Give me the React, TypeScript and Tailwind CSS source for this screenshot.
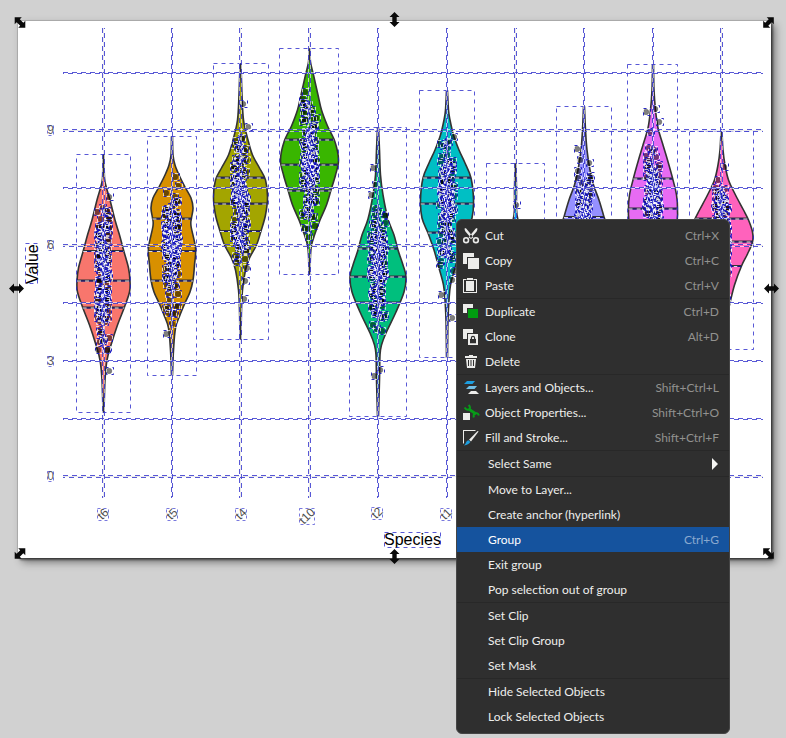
import type { ReactNode } from "react";

type Violin = {
  cx: number;
  color: string;
  box: [number, number, number, number];
  profile: [number, number][];
  lines: number[];
  cloud: [number, number, number];
  spread: number;
  strays: [number, number][];
};

const INK = "#2020c8";

const violins: Violin[] = [
  {
    cx: 103.5, color: "#F8766D", box: [76.5, 154.5, 54, 258],
    profile: [[155, 0.5], [178, 1], [188, 3], [200, 6.5], [220, 11.5], [235, 16], [250, 20], [268, 25], [281, 26.5], [292, 26], [307, 21], [325, 14], [345, 7.5], [360, 3.5], [380, 1.5], [412, 0.5]],
    lines: [251, 280.5, 307.5], cloud: [194, 270, 356], spread: 8,
    strays: [[109, 197], [109, 371], [97, 212], [98, 228], [98, 350], [107, 350]],
  },
  {
    cx: 172, color: "#D89000", box: [147.5, 136.5, 49, 239],
    profile: [[137, 0.5], [155, 1], [165, 3], [175, 7], [187, 13], [198, 19], [208, 21], [218, 19.5], [226, 19], [248, 23.5], [265, 22.5], [280, 21], [292, 18], [303, 13], [315, 8], [328, 3.5], [350, 1.5], [375, 0.5]],
    lines: [218.5, 251, 280.5], cloud: [188, 245, 322], spread: 9,
    strays: [[166, 334], [175, 177], [178, 186], [166, 193], [172, 324]],
  },
  {
    cx: 240.5, color: "#A3A500", box: [213.5, 63.5, 55, 276],
    profile: [[64, 0.5], [95, 1.5], [120, 3], [140, 7.5], [155, 12], [168, 19], [180, 25], [197, 27], [215, 25], [231, 20.5], [245, 16], [258, 9], [270, 5], [290, 2], [310, 1], [339, 0.5]],
    lines: [177.5, 203.5, 231], cloud: [130, 202, 278], spread: 9,
    strays: [[243, 104], [248, 127], [245, 281], [244, 299], [236, 141], [246, 160]],
  },
  {
    cx: 309.5, color: "#39B600", box: [279.5, 48.5, 59, 226],
    profile: [[49, 0.5], [62, 1], [75, 4], [95, 8.5], [110, 12], [126, 18], [142, 25.5], [160, 29], [175, 26], [190, 21.5], [205, 17], [220, 10.5], [235, 5], [245, 2], [255, 1], [274, 0.5]],
    lines: [139.5, 164.5, 190.5], cloud: [84, 160, 238], spread: 9,
    strays: [[305, 92], [305, 106], [316, 118], [303, 112], [315, 202]],
  },
  {
    cx: 378, color: "#00BF7D", box: [349.5, 127.5, 57, 289],
    profile: [[128, 0.5], [150, 1.5], [175, 2.5], [195, 5], [219, 10], [235, 16], [250, 20], [265, 25], [277, 28], [292, 26], [312, 18], [333, 8], [345, 3.5], [355, 2], [380, 1.5], [416, 0.5]],
    lines: [248.5, 276.5, 302.5], cloud: [200, 272, 340], spread: 9,
    strays: [[373, 168], [371, 195], [375, 185], [374, 376], [380, 370], [385, 223]],
  },
  {
    cx: 447, color: "#00BFC4", box: [419.5, 90.5, 55, 267],
    profile: [[91, 0.5], [110, 1.5], [120, 3], [135, 6.5], [150, 12], [163, 18], [178, 24], [200, 26.5], [218, 25], [233, 19], [250, 13], [268, 8], [285, 3.5], [300, 2], [320, 1], [357, 0.5]],
    lines: [177.5, 203.5, 232.5], cloud: [128, 200, 280], spread: 9,
    strays: [[441, 295], [452, 318], [452, 280], [440, 144]],
  },
  {
    cx: 515.5, color: "#00B0F6", box: [486.5, 163.5, 58, 220],
    profile: [[164, 0.5], [190, 1], [215, 1.5], [240, 8], [280, 26], [330, 8], [380, 0.5]],
    lines: [], cloud: [250, 280, 320], spread: 7, strays: [[516, 205]],
  },
  {
    cx: 584, color: "#9590FF", box: [556.5, 106.5, 55, 240],
    profile: [[107, 0.5], [130, 1.5], [150, 3], [170, 6], [185, 9.5], [200, 15], [217, 20], [240, 26], [280, 10], [345, 0.5]],
    lines: [217], cloud: [166, 225, 290], spread: 8,
    strays: [[577, 149], [589, 163], [580, 160], [590, 176], [581, 193], [590, 195]],
  },
  {
    cx: 653, color: "#E76BF3", box: [627.5, 64.5, 50, 240],
    profile: [[65, 0.5], [90, 1], [110, 2.5], [128, 5], [145, 10], [160, 14.5], [178, 19.5], [195, 23.5], [210, 24.5], [225, 23], [260, 10], [300, 0.5]],
    lines: [178.5, 208.5], cloud: [136, 200, 280], spread: 9,
    strays: [[646, 112], [655, 109], [659, 122], [646, 156], [650, 132]],
  },
  {
    cx: 721.5, color: "#FF62BC", box: [689.5, 131.5, 64, 218],
    profile: [[132, 0.5], [150, 1.5], [165, 3.5], [180, 7], [195, 14], [210, 22], [220, 27], [232, 31], [242, 31], [254, 26], [266, 20], [285, 13], [305, 8], [330, 2], [349, 0.5]],
    lines: [218.5, 241.5, 266], cloud: [176, 232, 300], spread: 9,
    strays: [[724, 167], [718, 180], [717, 205]],
  },
];

const minorRows = [72.5, 187.5, 302.5, 360.5, 418.5];
const majorRows = [129.5, 244.5, 475.5];
const columns: [number, number][] = [
  [102.5, 104.5], [171.5, 172.5], [239.5, 241.5], [308.5, 310.5], [377.5, 378.5],
  [446.5, 447.5], [514.5, 516.5], [583.5, 584.5], [652.5, 653.5], [720.5, 722.5],
];

const rowLabels: [string, number][] = [["9", 130], ["6", 245], ["3", 361], ["0", 476]];
const columnLabels: [string, number, number][] = [
  ["t6", 103, 514], ["t5", 172, 514], ["t4", 241, 514], ["t10", 307, 516], ["t2", 377, 513], ["t1", 446, 514],
];

function outline(v: Violin) {
  const right = v.profile.map(([y, w]) => [v.cx + w, y]);
  const left = v.profile.map(([y, w]) => [v.cx - w, y]).reverse();
  const side = (pts: number[][]) => {
    let d = "";
    for (let i = 0; i < pts.length - 1; i++) {
      const a = pts[Math.max(0, i - 1)];
      const b = pts[i];
      const c = pts[i + 1];
      const e = pts[Math.min(pts.length - 1, i + 2)];
      d += `C${b[0] + (c[0] - a[0]) / 6} ${b[1] + (c[1] - a[1]) / 6} ${c[0] - (e[0] - b[0]) / 6} ${c[1] - (e[1] - b[1]) / 6} ${c[0]} ${c[1]}`;
    }
    return d;
  };
  return `M${right[0][0]} ${right[0][1]}${side(right)}L${left[0][0]} ${left[0][1]}${side(left)}Z`;
}

function widthAt(v: Violin, y: number) {
  for (let i = 0; i < v.profile.length - 1; i++) {
    const [y0, w0] = v.profile[i];
    const [y1, w1] = v.profile[i + 1];
    if (y >= y0 && y <= y1) return w0 + ((w1 - w0) * (y - y0)) / (y1 - y0);
  }
  return 1;
}

function scatter(v: Violin, seed: number) {
  let s = seed * 7919 + 17;
  const rnd = () => {
    s = (s * 16807) % 2147483647;
    return s / 2147483647;
  };
  const [top, mid, bottom] = v.cloud;
  const pts: [number, number][] = [];
  for (let i = 0; i < 125; i++) {
    const t = (rnd() + rnd()) / 2;
    const y = t < 0.5 ? top + (mid - top) * t * 2 : mid + (bottom - mid) * (t - 0.5) * 2;
    const reach = Math.min(v.spread - 2, widthAt(v, y) + 2);
    pts.push([Math.round(v.cx + (rnd() * 2 - 1) * reach), Math.round(y)]);
  }
  return pts;
}

function Dot({ x, y }: { x: number; y: number }) {
  return <circle cx={x} cy={y} r={2.8} fill="#000" fillOpacity={0.5} stroke="#222" strokeOpacity={0.5} strokeWidth={0.6} />;
}

function DotBox({ x, y, n }: { x: number; y: number; n: number }) {
  return (
    <g fill="none">
      <rect x={x - 3.5} y={y - 3.5} width={7} height={7} stroke="#fff" strokeOpacity={0.7} strokeDasharray="4 3" strokeDashoffset={(n % 7) + 4} />
      <rect x={x - 3.5} y={y - 3.5} width={7} height={7} stroke="#1212c0" strokeOpacity={0.9} strokeDasharray="3 4" strokeDashoffset={n % 7} />
    </g>
  );
}

function ViolinShape({ v, index }: { v: Violin; index: number }) {
  const [x, y, w, h] = v.box;
  const cloud = scatter(v, index + 1);
  return (
    <g>
      <path d={outline(v)} fill={v.color} stroke="#333" strokeWidth={1.6} />
      {v.lines.map((ly) => {
        const hw = widthAt(v, ly);
        return (
          <g key={ly}>
            <line x1={v.cx - hw} x2={v.cx + hw} y1={ly} y2={ly} stroke="#333" strokeWidth={2} />
            <line x1={v.cx - hw} x2={v.cx + hw} y1={ly + 0.5} y2={ly + 0.5} stroke="#d8d8ee" strokeDasharray="4 4" />
            <line x1={v.cx - hw} x2={v.cx + hw} y1={ly + 0.5} y2={ly + 0.5} stroke="#14148c" strokeDasharray="4 4" strokeDashoffset={4} />
          </g>
        );
      })}
      {cloud.map(([px, py], i) => <Dot key={i} x={px} y={py} />)}
      {v.strays.map(([px, py], i) => <Dot key={`s${i}`} x={px} y={py} />)}
      {cloud.map(([px, py], i) => <DotBox key={i} x={px} y={py} n={i} />)}
      {v.strays.map(([px, py], i) => <DotBox key={`s${i}`} x={px + 1} y={py} n={i} />)}
      <rect x={x} y={y} width={w} height={h} fill="none" stroke={INK} strokeOpacity={0.75} strokeDasharray="4 4" />
    </g>
  );
}

function Handle({ x, y, angle }: { x: number; y: number; angle: number }) {
  return (
    <path
      transform={`translate(${x} ${y}) rotate(${angle})`}
      d="M-7.5 0L-2.5 -5V-2.2H2.5V-5L7.5 0L2.5 5V2.2H-2.5V5Z"
      fill="#0a0a0a"
    />
  );
}

function Guide({ x1, y1, x2, y2, offset }: { x1: number; y1: number; x2: number; y2: number; offset: number }) {
  return (
    <g>
      <line x1={x1} y1={y1} x2={x2} y2={y2} stroke="#fff" strokeOpacity={0.6} />
      <line x1={x1} y1={y1} x2={x2} y2={y2} stroke={INK} strokeOpacity={0.75} strokeDasharray="5 4" strokeDashoffset={offset} />
    </g>
  );
}

function Chart() {
  return (
    <svg
      viewBox="18 21 753 537"
      className="block h-auto w-full overflow-visible"
      role="img"
      aria-label="Violin plot of Value by Species"
      fontFamily='"Liberation Sans", Arial, sans-serif'
    >
      {majorRows.map((y) => <line key={y} x1={63} x2={763} y1={y + 1} y2={y + 1} stroke="#ebebeb" />)}
      {columns.map(([a, b]) => <line key={a} x1={(a + b) / 2} x2={(a + b) / 2} y1={28} y2={498} stroke="#ebebeb" />)}
      {violins.map((v, i) => <ViolinShape key={v.cx} v={v} index={i} />)}
      {minorRows.map((y) => (
        <g key={y}>
          <Guide x1={63} x2={763} y1={y} y2={y} offset={0} />
          <Guide x1={63} x2={763} y1={y + 1} y2={y + 1} offset={4} />
        </g>
      ))}
      {majorRows.map((y) => (
        <g key={y}>
          <Guide x1={63} x2={763} y1={y} y2={y} offset={0} />
          <Guide x1={63} x2={763} y1={y + 2} y2={y + 2} offset={3} />
        </g>
      ))}
      {columns.map(([a, b]) => (
        <g key={a}>
          <Guide x1={a} x2={a} y1={28} y2={498} offset={0} />
          <Guide x1={b} x2={b} y1={28} y2={498} offset={4} />
        </g>
      ))}
      {rowLabels.map(([t, y]) => (
        <g key={t}>
          <text x={50.5} y={y + 4} textAnchor="middle" fontSize={12} fill="#5d5d5d">{t}</text>
          <rect x={47.5} y={y - 4.5} width={6} height={10} fill="none" stroke={INK} strokeOpacity={0.6} strokeDasharray="3 3" />
        </g>
      ))}
      {columnLabels.map(([t, x, y]) => {
        const s = t.length > 2 ? 16 : 12;
        return (
          <g key={t}>
            <text transform={`translate(${x} ${y}) rotate(-45)`} y={4} textAnchor="middle" fontSize={12} fill="#4d4d4d">{t}</text>
            <rect x={Math.round(x - s / 2) + 0.5} y={Math.round(y - s / 2) + 0.5} width={s - 1} height={s} fill="none" stroke={INK} strokeOpacity={0.6} strokeDasharray="3 3" />
          </g>
        );
      })}
      <text x={384} y={545} fontSize={16} fill="#000">Species</text>
      <rect x={384.5} y={532.5} width={56} height={15} fill="none" stroke={INK} strokeOpacity={0.75} strokeDasharray="4 4" />
      <text transform="translate(38 284) rotate(-90)" fontSize={16} fill="#000">Value</text>
      <rect x={25.5} y={243.5} width={12} height={40} fill="none" stroke={INK} strokeOpacity={0.75} strokeDasharray="4 4" />
      <Handle x={20} y={22.5} angle={45} />
      <Handle x={394.5} y={19.5} angle={90} />
      <Handle x={768.5} y={22.5} angle={-45} />
      <Handle x={16.5} y={288.5} angle={0} />
      <Handle x={771.5} y={288.5} angle={0} />
      <Handle x={20} y={553.5} angle={-45} />
      <Handle x={394.5} y={556.5} angle={90} />
      <Handle x={768.5} y={553.5} angle={45} />
    </svg>
  );
}

function Icon({ children }: { children: ReactNode }) {
  return (
    <svg viewBox="0 0 16 16" className="size-4 shrink-0 overflow-visible" fill="#ececea" aria-hidden="true">
      {children}
    </svg>
  );
}

const icons: Record<string, ReactNode> = {
  cut: (
    <Icon>
      <path d="M1.8 0L3.2 0.6L10.4 9.2L8.4 11L7.4 9.2L2.4 3.6Q1.2 1.6 1.8 0ZM14.2 0L12.8 0.6L5.6 9.2L7.6 11L8.6 9.2L13.6 3.6Q14.8 1.6 14.2 0Z" />
      <circle cx="3.1" cy="12.2" r="2.4" fill="none" stroke="#ececea" strokeWidth="1.6" />
      <circle cx="12.9" cy="12.2" r="2.4" fill="none" stroke="#ececea" strokeWidth="1.6" />
    </Icon>
  ),
  copy: (
    <Icon>
      <path d="M0 0H11V4H4V11H0ZM5 5H16V16H5Z" />
    </Icon>
  ),
  paste: (
    <Icon>
      <path d="M0 1H3.5V2H1V14H13V2H10.5V1H14V15H0ZM4 0H10V2H4ZM3 3H11V13H3Z" />
    </Icon>
  ),
  duplicate: (
    <Icon>
      <path d="M0 0H10V4H4V9H0Z" />
      <path d="M5 5H15V14H5Z" fill="#009b0f" />
    </Icon>
  ),
  clone: (
    <Icon>
      <path d="M0 0H10V4H4V10H0Z" />
      <path fillRule="evenodd" d="M5 5H15V16H5ZM7 10V14.2H13V10H12.2V9A2.2 2.2 0 0 0 7.8 9V10ZM9 10V9A1 1 0 0 1 11 9V10Z" />
    </Icon>
  ),
  delete: (
    <Icon>
      <path fillRule="evenodd" d="M2 2H6V1H10V2H14V4H2ZM3 5H13L12 14H4ZM5 6V12H6V6ZM7.5 6V12H8.5V6ZM10 6V12H11V6Z" />
    </Icon>
  ),
  layers: (
    <Icon>
      <path d="M4 1H12L9.5 4H1Z" fill="#1c9ee0" />
      <path d="M6 6H14L11.5 9H3Z" fill="#72bfe6" />
      <path d="M8 11H13L16 14H5Z" />
    </Icon>
  ),
  properties: (
    <Icon>
      <path d="M0 8H7V15H0Z" />
      <g fill="none" stroke="#079b18">
        <path d="M5.5 3.8L13 9" strokeWidth="2.8" />
        <path d="M1.6 2.6Q3.4 5.6 6 4.4Q8.2 2.8 5.6 0" strokeWidth="2" />
        <path d="M10.8 12.4Q10 9.4 12.2 8.4Q15 7.6 15.8 10.4" strokeWidth="2" />
      </g>
    </Icon>
  ),
  fill: (
    <Icon>
      <path d="M0 0H13L12 1H1V13L0 14Z" />
      <path d="M15.6 1.6L8 11.4L6 9.8L14.6 1Z" />
      <path d="M5.4 10.2L7.4 12Q5.6 15 1 15.4Q2.6 14 3 12.4Q3.6 10.4 5.4 10.2Z" fill="#1c9ee0" />
    </Icon>
  ),
};

type Item = { label: string; keys?: string; icon?: string; submenu?: boolean; active?: boolean };

const groups: Item[][] = [
  [
    { label: "Cut", keys: "Ctrl+X", icon: "cut" },
    { label: "Copy", keys: "Ctrl+C", icon: "copy" },
    { label: "Paste", keys: "Ctrl+V", icon: "paste" },
  ],
  [
    { label: "Duplicate", keys: "Ctrl+D", icon: "duplicate" },
    { label: "Clone", keys: "Alt+D", icon: "clone" },
    { label: "Delete", icon: "delete" },
  ],
  [
    { label: "Layers and Objects...", keys: "Shift+Ctrl+L", icon: "layers" },
    { label: "Object Properties...", keys: "Shift+Ctrl+O", icon: "properties" },
    { label: "Fill and Stroke...", keys: "Shift+Ctrl+F", icon: "fill" },
  ],
  [{ label: "Select Same", submenu: true }],
  [
    { label: "Move to Layer..." },
    { label: "Create anchor (hyperlink)" },
    { label: "Group", keys: "Ctrl+G", active: true },
    { label: "Exit group" },
    { label: "Pop selection out of group" },
  ],
  [{ label: "Set Clip" }, { label: "Set Clip Group" }, { label: "Set Mask" }],
  [{ label: "Hide Selected Objects" }, { label: "Lock Selected Objects" }],
];

function MenuRow({ item }: { item: Item }) {
  const indent = item.icon ? "pl-1.5" : "pl-[31px]";
  const tone = item.active ? "bg-[#15539e] text-white" : "text-[#eeeeec] hover:bg-[#15539e]";
  return (
    <button
      type="button"
      role="menuitem"
      aria-haspopup={item.submenu ? "menu" : undefined}
      className={`flex h-[25px] w-full items-center gap-1.5 pr-2.5 text-left whitespace-nowrap ${indent} ${tone}`}
    >
      {item.icon && icons[item.icon]}
      <span className="flex-1">{item.label}</span>
      {item.keys && <span className={item.active ? "text-[#8aa9cf]" : "text-[#92928f]"}>{item.keys}</span>}
      {item.submenu && (
        <svg viewBox="0 0 8 12" className="h-3 w-2" aria-hidden="true">
          <path d="M1 0L7 6L1 12Z" fill="#f4f4f2" />
        </svg>
      )}
    </button>
  );
}

function ContextMenu() {
  return (
    <div
      role="menu"
      aria-label="Object menu"
      className="absolute top-[219px] left-[456px] w-[274px] rounded-md border border-[#454545] bg-[#2f2f2f] pt-[3px] pb-1 text-[12px] leading-4"
    >
      {groups.map((group, i) => (
        <div key={group[0].label} role="group" className={i > 0 ? "border-t border-[#282828]" : ""}>
          {group.map((item) => <MenuRow key={item.label} item={item} />)}
        </div>
      ))}
    </div>
  );
}

export default function App() {
  return (
    <main className="relative min-h-screen bg-[#d1d1d1] pt-[21px] pr-[15px] pb-6 pl-[18px] font-['Lato','Open_Sans',sans-serif]">
      <div className="bg-white shadow-[0_0_0_1px_rgba(0,0,0,0.12),2px_2px_2px_rgba(0,0,0,0.5),4px_4px_8px_rgba(0,0,0,0.45)]">
        <Chart />
      </div>
      <ContextMenu />
    </main>
  );
}
